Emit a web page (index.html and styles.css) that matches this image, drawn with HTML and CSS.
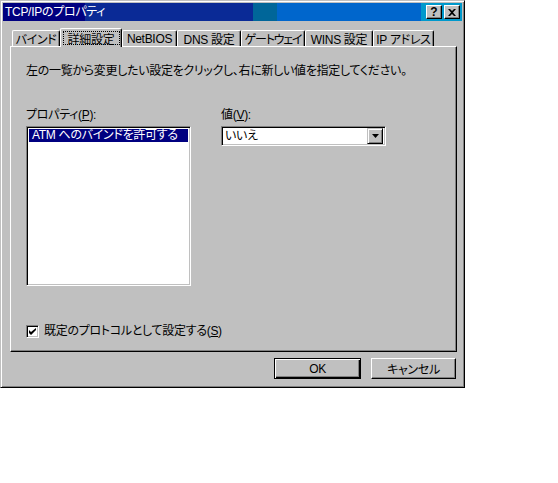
FILE: index.html
```html
<!DOCTYPE html>
<html lang="ja">
<head>
<meta charset="utf-8">
<title>TCP/IPのプロパティ</title>
<link rel="stylesheet" href="styles.css">
</head>
<body>
<div class="window">
  <div class="titlebar">
    <span class="title">TCP/IPのプロパティ</span>
    <div class="caption-btns">
      <span class="cbtn help">?</span>
      <span class="cbtn close"><svg width="8" height="7" viewBox="0 0 8 7"><path d="M0 0h2l2 2 2-2h2L5 3.5 8 7H6L4 5 2 7H0l3-3.5z" fill="#000"/></svg></span>
    </div>
  </div>
  <div class="tabs">
    <div class="tab t1">バインド</div>
    <div class="tab sel t2"><span class="focus">詳細設定</span></div>
    <div class="tab t3">NetBIOS</div>
    <div class="tab t4">DNS 設定</div>
    <div class="tab t5">ゲートウェイ</div>
    <div class="tab t6">WINS 設定</div>
    <div class="tab t7">IP アドレス</div>
  </div>
  <div class="panel">
    <p class="desc">左の一覧から変更したい設定をクリックし、右に新しい値を指定してください。</p>
    <div class="cols">
      <div class="col">
        <div class="label">プロパティ(<u>P</u>):</div>
        <div class="listbox">
          <div class="item selected">ATM へのバインドを許可する</div>
        </div>
      </div>
      <div class="col right">
        <div class="label">値(<u>V</u>):</div>
        <div class="combo">
          <span class="val">いいえ</span>
          <span class="dd"><svg width="7" height="4" viewBox="0 0 7 4"><path d="M0 0h7L3.5 4z" fill="#000"/></svg></span>
        </div>
      </div>
    </div>
    <div class="check-row">
      <span class="checkbox"><svg width="7" height="7" viewBox="0 0 7 7"><path d="M0 2v3l2 2 5-5V0L2 4z" fill="#000"/></svg></span>
      <span class="check-label">既定のプロトコルとして設定する(<u>S</u>)</span>
    </div>
  </div>
  <div class="buttons">
    <div class="btn default">OK</div>
    <div class="btn cancel">キャンセル</div>
  </div>
</div>
</body>
</html>
```

FILE: styles.css
```css
html, body {
  margin: 0;
  padding: 0;
  background: #fff;
}
body {
  font-family: "Liberation Sans", "Noto Sans CJK JP", sans-serif;
  font-size: 12px;
  font-feature-settings: "palt";
  letter-spacing: -0.3px;
  color: #000;
}
.window {
  box-sizing: border-box;
  width: 465px;
  height: 388px;
  background: #c0c0c0;
  border: 1px solid;
  border-color: #c0c0c0 #000 #000 #c0c0c0;
  box-shadow: inset 1px 1px #fff, inset -1px -1px #808080;
  padding: 2px;
}
.titlebar {
  height: 18px;
  display: flex;
  align-items: center;
  justify-content: space-between;
  padding-left: 2px;
  color: #fff;
  background: linear-gradient(to right, #000080 0 82px, #0a2a96 82px 250px, #006699 250px 274px, #0066cc 274px 418px, #0099cc 418px);
}
.title {
  line-height: 18px;
  white-space: nowrap;
}
.caption-btns {
  display: flex;
  gap: 2px;
  margin-right: 2px;
}
.cbtn {
  box-sizing: border-box;
  width: 16px;
  height: 14px;
  background: #c0c0c0;
  border: 1px solid;
  border-color: #fff #000 #000 #fff;
  box-shadow: inset -1px -1px #808080;
  display: flex;
  align-items: center;
  justify-content: center;
  color: #000;
}
.cbtn.help {
  font-family: "Liberation Sans", sans-serif;
  font-weight: bold;
  font-size: 12px;
  line-height: 12px;
  letter-spacing: 0;
}
.tabs {
  display: flex;
  align-items: flex-end;
  height: 18px;
  margin-top: 7px;
  padding-left: 9px;
}
.tab {
  box-sizing: border-box;
  height: 16px;
  background: #c0c0c0;
  border-top: 1px solid #fff;
  border-left: 1px solid #fff;
  border-right: 1px solid #000;
  box-shadow: inset -1px 0 #808080;
  border-radius: 2px 2px 0 0;
  display: flex;
  align-items: center;
  justify-content: center;
  white-space: nowrap;
}
.tab.sel {
  height: 19px;
  margin-bottom: -1px;
  position: relative;
  z-index: 1;
  align-items: flex-start;
  padding-top: 2px;
}
.focus {
  box-sizing: border-box;
  width: 57px;
  height: 14px;
  border: 1px dotted #000;
  display: flex;
  align-items: center;
  justify-content: center;
}
.t1 { width: 48px; }
.t2 { width: 62px; }
.t3 { width: 55px; }
.t4 { width: 64px; }
.t5 { width: 64px; letter-spacing: -1.2px; }
.t6 { width: 68px; }
.t7 { width: 61px; }
.panel {
  box-sizing: border-box;
  width: 447px;
  height: 306px;
  margin-left: 7px;
  border: 1px solid;
  border-color: #fff #000 #000 #fff;
  box-shadow: inset -1px -1px #808080;
  padding: 18px 15px 0;
}
.desc {
  margin: 0;
  line-height: 13px;
  white-space: nowrap;
}
.cols {
  display: flex;
  gap: 30px;
  margin-top: 31px;
}
.col {
  width: 165px;
}
.label {
  line-height: 13px;
  margin-bottom: 4px;
  white-space: nowrap;
}
.listbox, .combo {
  box-sizing: border-box;
  background: #fff;
  border: 1px solid;
  border-color: #808080 #fff #fff #808080;
  box-shadow: inset 1px 1px #000, inset -1px -1px #c0c0c0;
  padding: 2px;
}
.listbox {
  height: 160px;
}
.item {
  height: 13px;
  line-height: 13px;
  padding-left: 3px;
  white-space: nowrap;
}
.item.selected {
  background: #000080;
  color: #fff;
}
.combo {
  height: 20px;
  display: flex;
  align-items: center;
  justify-content: space-between;
  padding: 2px 2px 2px 3px;
}
.val {
  line-height: 16px;
}
.dd {
  box-sizing: border-box;
  width: 16px;
  height: 16px;
  background: #c0c0c0;
  border: 1px solid;
  border-color: #c0c0c0 #000 #000 #c0c0c0;
  box-shadow: inset 1px 1px #fff, inset -1px -1px #808080;
  display: flex;
  align-items: center;
  justify-content: center;
}
.check-row {
  display: flex;
  align-items: center;
  margin-top: 39px;
  height: 13px;
}
.checkbox {
  box-sizing: border-box;
  width: 13px;
  height: 13px;
  background: #fff;
  border: 1px solid;
  border-color: #808080 #fff #fff #808080;
  box-shadow: inset 1px 1px #000, inset -1px -1px #c0c0c0;
  display: flex;
  align-items: center;
  justify-content: center;
}
.check-label {
  margin-left: 5px;
  line-height: 13px;
  white-space: nowrap;
}
.buttons {
  display: flex;
  justify-content: flex-end;
  gap: 10px;
  margin-top: 6px;
  padding-right: 6px;
}
.btn {
  box-sizing: border-box;
  height: 21px;
  display: flex;
  align-items: center;
  justify-content: center;
  background: #c0c0c0;
  border: 1px solid;
}
.btn.default {
  width: 87px;
  border-color: #000;
  box-shadow: inset 1px 1px #fff, inset -1px -1px #000, inset -2px -2px #808080;
}
.btn.cancel {
  width: 85px;
  border-color: #fff #000 #000 #fff;
  box-shadow: inset -1px -1px #808080;
}
```
